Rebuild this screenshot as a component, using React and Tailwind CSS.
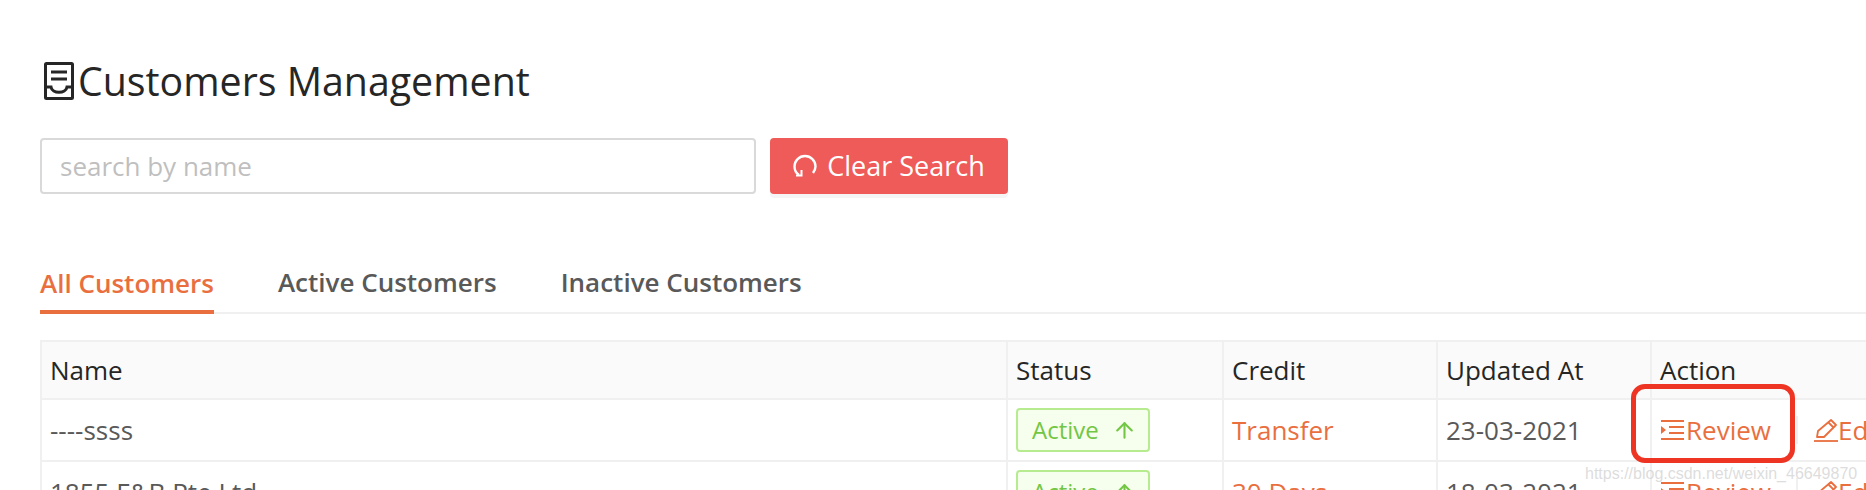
import React from 'react';
import { ArrowUp } from 'lucide-react';

const font = { fontFamily: '"Open Sans", sans-serif' };

const rows = [
    { name: '----ssss', credit: 'Transfer', updated: '23-03-2021' },
    { name: '1855 F&B Pte Ltd', credit: '30 Days', updated: '18-03-2021' },
];

const TitleIcon = () => (
    <svg width="30" height="38" viewBox="0 0 30 38" fill="none" stroke="#262626" strokeWidth="3" className="ml-1 shrink-0">
        <rect x="1.500" y="1.500" width="27" height="35" rx="1" />
        <path d="M7 10h16M7 17h16" />
        <path d="M3 25h4c1 7 15 7 16 0h4" />
    </svg>
);

const ReloadIcon = () => (
    <svg width="24" height="24" viewBox="0 0 24 24" fill="none" stroke="#fff" strokeWidth="2.400" className="shrink-0">
        <path d="M6 21C3 19 1.500 16 1.500 12.500A10.500 10.500 0 0 1 22.500 12.500C22.500 15 21.500 17 20 19" />
        <path d="M3 21.500h5.500V16" strokeWidth="2" />
    </svg>
);

const ReviewIcon = () => (
    <svg width="23" height="20" viewBox="0 0 23 20" fill="none" stroke="#e96f3f" strokeWidth="1.800" className="mr-[2px] shrink-0">
        <path d="M0 1h23M8 7h15M8 13h15M0 19h23" />
        <path d="M0 6l5 4-5 4z" fill="#e96f3f" stroke="none" />
    </svg>
);

const EditIcon = () => (
    <svg width="24" height="23" viewBox="0 0 24 23" fill="none" stroke="#e96f3f" strokeWidth="1.800" className="shrink-0">
        <path d="M0 22h24" />
        <path d="M3 18l1-6L17 1l5 5-12 12z" strokeLinejoin="round" />
        <path d="M14.500 3.500l5 5" />
    </svg>
);

const Row = ({ row }) => (
    <div className="flex h-[62px] items-center border-b-2 border-[#f0f0f0] text-[26px] text-[#595959]">
        <div className="flex h-full w-[968px] items-center border-r-2 border-l-2 border-[#f0f0f0] pl-2">{row.name}</div>
        <div className="flex h-full w-[216px] items-center border-r-2 border-[#f0f0f0] pl-2">
            <span className="flex h-[44px] w-[134px] items-center gap-[13px] rounded border-2 border-[#b7eb8f] bg-[#f6ffed] pl-[14px] text-[24px] text-[#73c644]">
                Active
                <ArrowUp size={25} strokeWidth={2} />
            </span>
        </div>
        <div className="flex h-full w-[214px] items-center border-r-2 border-[#f0f0f0] pl-2 text-[#e96f3f]">{row.credit}</div>
        <div className="flex h-full w-[214px] items-center border-r-2 border-[#f0f0f0] pl-2">{row.updated}</div>
        <div className="flex h-full w-[300px] items-center pl-[9px] text-[#e96f3f]">
            <span className="flex w-[135px] items-center"><ReviewIcon />Review</span>
            <span className="h-[28px] w-[2px] bg-[#f0f0f0]"></span>
            <span className="ml-4 flex items-center"><EditIcon />Edit</span>
        </div>
    </div>
);

const App = () => {
    return (
        <div className="relative h-[490px] overflow-hidden bg-white pt-[62px] pl-10" style={font}>
            <div className="flex h-[38px] items-center">
                <TitleIcon />
                <h1 className="ml-[4px] text-[39.3px] font-medium whitespace-nowrap text-[#262626]">Customers Management</h1>
            </div>

            <div className="mt-[38px] flex gap-[14px]">
                <input
                    type="text"
                    placeholder="search by name"
                    className="h-[56px] w-[716px] rounded border-2 border-[#d9d9d9] bg-white pl-[18px] text-[26px] placeholder:text-[#bfbfbf]"
                />
                <button className="flex h-[56px] w-[238px] items-center justify-center gap-[10px] rounded bg-[#ef5b58] text-[27px] font-medium text-white shadow-[0_4px_0_rgba(0,0,0,0.04)]">
                    <ReloadIcon />
                    Clear Search
                </button>
            </div>

            <div className="mt-[62px] flex h-[58px] gap-16 border-b-2 border-[#f0f0f0] text-[26px] font-semibold text-[#595959]">
                <div className="-mb-[2px] flex items-center border-b-4 border-[#e96f3f] text-[#e96f3f]">All Customers</div>
                <div className="flex items-center pb-[4px]">Active Customers</div>
                <div className="flex items-center pb-[4px]">Inactive Customers</div>
            </div>

            <div className="mt-[26px] w-[1912px] border-t-2 border-[#f0f0f0]">
                <div className="flex h-[58px] items-stretch border-b-2 border-[#f0f0f0] bg-[#fafafa] text-[26px] text-[#262626]">
                    <div className="flex w-[968px] items-center border-r-2 border-l-2 border-[#f0f0f0] pl-2">Name</div>
                    <div className="flex w-[216px] items-center border-r-2 border-[#f0f0f0] pl-2">Status</div>
                    <div className="flex w-[214px] items-center border-r-2 border-[#f0f0f0] pl-2">Credit</div>
                    <div className="flex w-[214px] items-center border-r-2 border-[#f0f0f0] pl-2">Updated At</div>
                    <div className="flex w-[300px] items-center pl-2">Action</div>
                </div>
                {rows.map(row => (
                    <Row key={row.name} row={row} />
                ))}
            </div>

            {/* annotation drawn over the screenshot */}
            <div className="absolute top-[384px] left-[1631px] h-[79px] w-[164px] rounded-[14px] border-[5px] border-[#ee3524]"></div>
            <div className="absolute top-[462px] left-[1585px] text-[16px] text-[#d4d4d4]/80" style={{ fontFamily: '"Liberation Sans", sans-serif' }}>
                https://blog.csdn.net/weixin_46649870
            </div>
        </div>
    );
};

export default App;
